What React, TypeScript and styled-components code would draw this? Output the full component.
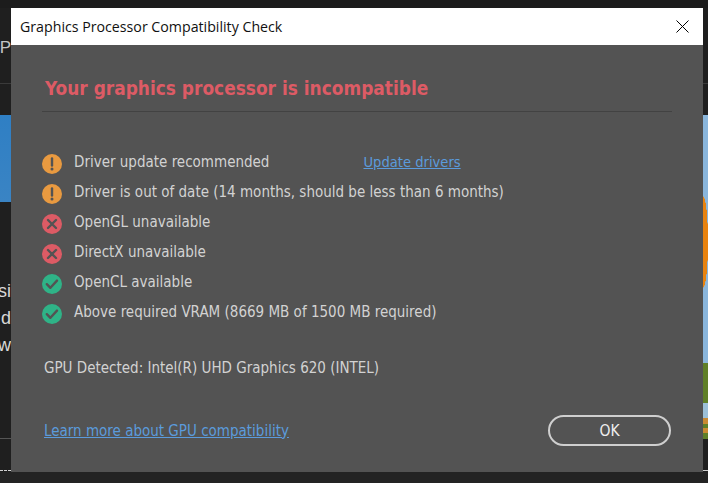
import React from "react";
import styled, { createGlobalStyle } from "styled-components";

const uiFont = `"DejaVu Sans Condensed", "Open Sans", "Liberation Sans", sans-serif`;

const GlobalStyle = createGlobalStyle`
  html, body {
    margin: 0;
    padding: 0;
    background: #1e1e1e;
    overflow: hidden;
  }
`;

const Screen = styled.div`
  width: 708px;
  height: 483px;
  display: flex;
  flex-direction: column;
  background: #1e1e1e;
  overflow: hidden;
`;

const TopBar = styled.div`
  height: 8px;
  flex: none;
  background: #1c1c1c;
`;

const Middle = styled.div`
  height: 464px;
  display: flex;
  flex: none;
`;

const LeftStrip = styled.div`
  width: 11px;
  flex: none;
  display: flex;
  flex-direction: column;
  background: #1f1f1f;
  overflow: hidden;
`;

const StripHeader = styled.div`
  height: 76px;
  flex: none;
  box-sizing: border-box;
  border-bottom: 1px solid #3a3a3a;
  display: flex;
  justify-content: flex-end;
  font: 17px/80px "Liberation Sans", Arial, sans-serif;
  color: #c4c4c4;
  overflow: hidden;
`;

const StripBlue = styled.div`
  height: 87px;
  flex: none;
  margin-top: 31px;
  margin-bottom: 76px;
  background: linear-gradient(180deg, #2f7fc4, #3a84c4);
`;

const StripLine = styled.div`
  height: 27px;
  flex: none;
  display: flex;
  justify-content: flex-end;
  font: 18px/27px "Liberation Sans", Arial, sans-serif;
  color: #d8d8d8;
  white-space: nowrap;
`;

const StripRule = styled.div`
  height: 1px;
  flex: none;
  margin-top: 79px;
  background: #555;
`;

const StripDash = styled.div`
  flex: none;
  margin-top: 31px;
  border-top: 1px dashed #d0d0d0;
`;

const Dialog = styled.div`
  width: 692px;
  flex: none;
  display: flex;
  flex-direction: column;
  background: #535353;
`;

const TitleBar = styled.div`
  height: 37px;
  flex: none;
  display: flex;
  align-items: center;
  justify-content: space-between;
  padding: 0 14px 0 9px;
  background: #fff;
`;

const TitleText = styled.div`
  font: 14.2px "Open Sans", "Liberation Sans", sans-serif;
  color: #111;
  white-space: nowrap;
`;

const Body = styled.div`
  flex: 1;
  display: flex;
  flex-direction: column;
  padding: 0 31px;
`;

const Heading = styled.h1`
  margin: 0;
  height: 67px;
  box-sizing: border-box;
  padding: 31px 0 0 3px;
  font: bold 18.9px/24px ${uiFont};
  color: #dd5b65;
  border-bottom: 1px solid #424242;
  white-space: nowrap;
`;

const CheckList = styled.div`
  margin-top: 35px;
  display: flex;
  flex-direction: column;
`;

const CheckRow = styled.div`
  height: 30px;
  display: flex;
  align-items: center;
  gap: 12px;
`;

const RowIcon = styled.span`
  display: flex;
  flex: none;
  position: relative;
  top: 1.5px;
`;

const RowText = styled.span`
  padding-bottom: 1px;
  font: 15px ${uiFont};
  color: #d2d2d2;
  white-space: nowrap;
`;

const LinkText = styled.a`
  font: 15px ${uiFont};
  color: #5b9bdc;
  text-decoration: underline;
  white-space: nowrap;
`;

const UpdateLink = styled(LinkText)`
  margin-left: 82px;
  padding-bottom: 1px;
  font-size: 14.6px;
`;

const FooterLink = styled(LinkText)`
  margin-left: 2px;
`;

const GpuLine = styled.div`
  margin-top: 32px;
  padding-left: 2px;
  font: 15px ${uiFont};
  color: #d2d2d2;
  white-space: nowrap;
`;

const Footer = styled.div`
  margin-top: 38px;
  display: flex;
  align-items: center;
  justify-content: space-between;
`;

const OkButton = styled.button`
  width: 123px;
  height: 31px;
  margin-right: 1px;
  padding: 0;
  background: transparent;
  border: 2px solid #cfcfcf;
  border-radius: 16px;
  font: 15.5px ${uiFont};
  color: #eee;
`;

const RightStrip = styled.div`
  width: 5px;
  flex: none;
  display: flex;
  flex-direction: column;
  background: #1f1f1f;
`;

const RightTop = styled.div`
  height: 76px;
  flex: none;
  box-sizing: border-box;
  border-bottom: 1px solid #3a3a3a;
  margin-bottom: 31px;
`;

const RightArt = styled.div`
  height: 324px;
  flex: none;
  background:
    radial-gradient(ellipse 5px 46px at 0 127px, #e8830f 98%, transparent 100%),
    linear-gradient(180deg, transparent 0 248px, #5f7f28 248px 288px, #9cc0d8 288px 303px, #c98a32 303px 309px, #5f7f28 309px 313px, #c98a32 313px 318px, #5f7f28 318px),
    #8ab6dc;
`;

const RightDash = styled.div`
  flex: none;
  margin-top: 31px;
  border-top: 1px solid #d0d0d0;
`;

const BottomBar = styled.div`
  flex: 1;
  background: #232323;
`;

const WarnIcon = () => (
  <svg width="20" height="20" viewBox="0 0 20 20">
    <circle cx="10" cy="10" r="10" fill="#e99a40" />
    <path d="M10 4.5v7" stroke="#535353" strokeWidth="2.4" strokeLinecap="round" />
    <circle cx="10" cy="15" r="1.5" fill="#535353" />
  </svg>
);

const ErrorIcon = () => (
  <svg width="20" height="20" viewBox="0 0 20 20">
    <circle cx="10" cy="10" r="10" fill="#dd5b65" />
    <path d="M6 6l8 8M14 6l-8 8" stroke="#535353" strokeWidth="2.4" strokeLinecap="round" />
  </svg>
);

const OkIcon = () => (
  <svg width="20" height="20" viewBox="0 0 20 20">
    <circle cx="10" cy="10" r="10" fill="#2fb387" />
    <path d="M4.8 10.2l3.6 3.6 6.6-7.2" fill="none" stroke="#535353" strokeWidth="2.4" strokeLinecap="round" strokeLinejoin="round" />
  </svg>
);

const CloseIcon = () => (
  <svg width="13" height="13" viewBox="0 0 13 13">
    <path d="M0.5 0.5l12 12M12.5 0.5l-12 12" stroke="#000" strokeWidth="1" />
  </svg>
);

const checks = [
  { icon: <WarnIcon />, text: "Driver update recommended", link: "Update drivers" },
  { icon: <WarnIcon />, text: "Driver is out of date (14 months, should be less than 6 months)" },
  { icon: <ErrorIcon />, text: "OpenGL unavailable" },
  { icon: <ErrorIcon />, text: "DirectX unavailable" },
  { icon: <OkIcon />, text: "OpenCL available" },
  { icon: <OkIcon />, text: "Above required VRAM (8669 MB of 1500 MB required)" },
];

export default function App() {
  return (
    <Screen>
      <GlobalStyle />
      <TopBar />
      <Middle>
        <LeftStrip>
          <StripHeader>P</StripHeader>
          <StripBlue />
          <StripLine>si</StripLine>
          <StripLine>d</StripLine>
          <StripLine>w</StripLine>
          <StripRule />
          <StripDash />
        </LeftStrip>
        <Dialog>
          <TitleBar>
            <TitleText>Graphics Processor Compatibility Check</TitleText>
            <CloseIcon />
          </TitleBar>
          <Body>
            <Heading>Your graphics processor is incompatible</Heading>
            <CheckList>
              {checks.map(check => (
                <CheckRow key={check.text}>
                  <RowIcon>{check.icon}</RowIcon>
                  <RowText>{check.text}</RowText>
                  {check.link && <UpdateLink>{check.link}</UpdateLink>}
                </CheckRow>
              ))}
            </CheckList>
            <GpuLine>GPU Detected: Intel(R) UHD Graphics 620 (INTEL)</GpuLine>
            <Footer>
              <FooterLink>Learn more about GPU compatibility</FooterLink>
              <OkButton>OK</OkButton>
            </Footer>
          </Body>
        </Dialog>
        <RightStrip>
          <RightTop />
          <RightArt />
          <RightDash />
        </RightStrip>
      </Middle>
      <BottomBar />
    </Screen>
  );
}
